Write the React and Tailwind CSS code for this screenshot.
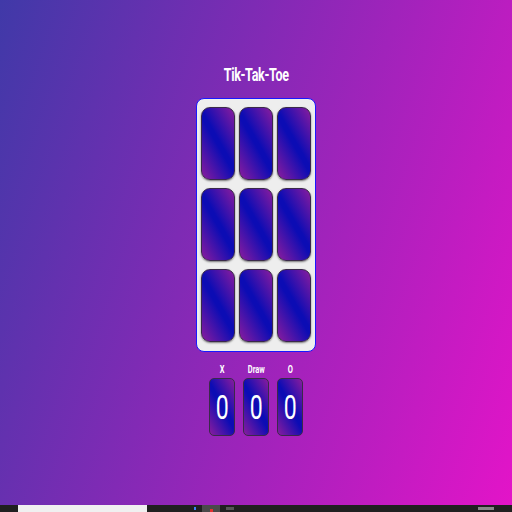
import React from 'react';

const CELL_BG = 'bg-[linear-gradient(60deg,#8a1c9e_0%,#0c0cb4_48%,#0c0cb4_54%,#8a1c9e_100%)]';

const Cell = () => (
  <div className={`h-[73px] w-[34px] rounded-[9px] border border-[#3a2a4a] ${CELL_BG} shadow-[0_1px_2px_rgba(0,0,0,0.5)]`} />
);

const Score = ({ label, value }) => (
  <div className="flex flex-col items-center w-[26px]">
    <span className="text-[10px] leading-[12px] font-bold text-white scale-x-[0.75]">{label}</span>
    <div className={`mt-[2px] flex h-[58px] w-[26px] items-center justify-center rounded-[5px] border border-[#3a2a4a] ${CELL_BG}`}>
      <span className="text-[33px] leading-none font-normal text-white scale-x-[0.7]">{value}</span>
    </div>
  </div>
);

export default function App() {
  return (
    <div className="flex h-[512px] w-[512px] flex-col overflow-hidden" style={{ fontFamily: 'Roboto, "Open Sans", sans-serif' }}>
      <main className="flex flex-1 flex-col items-center bg-[linear-gradient(108deg,#4039a8_0%,#e314c8_100%)]">
        <h1 className="mt-[61px] text-[19px] leading-[28px] font-bold text-white tracking-[-0.5px] scale-x-[0.66]">Tik-Tak-Toe</h1>
        <div className="mt-[9px] grid grid-cols-3 gap-x-[4px] gap-y-[8px] rounded-[8px] border-[1.5px] border-[#1818ff] bg-[#eeeeee] px-[4px] pt-[8px] pb-[9px]">
          {Array.from({ length: 9 }).map((_, i) => <Cell key={i} />)}
        </div>
        <div className="mt-[12px] flex gap-[8px]">
          <Score label="X" value="0" />
          <Score label="Draw" value="0" />
          <Score label="O" value="0" />
        </div>
      </main>
      <footer className="flex h-[7px] items-center bg-[#202020]">
        <div className="ml-[18px] h-full w-[129px] bg-[#f0f0f0]" />
        <div className="ml-[47px] h-[3px] w-[2px] bg-[#3b82f6]" />
        <div className="ml-[6px] h-full w-[18px] bg-[#4a4a4a] flex justify-center"><div className="h-[3px] w-[3px] bg-[#e03030] mt-[4px]" /></div>
        <div className="ml-[6px] h-[3px] w-[8px] bg-[#555]" />
        <div className="ml-auto mr-[18px] h-[3px] w-[16px] bg-[#888]" />
      </footer>
    </div>
  );
}
